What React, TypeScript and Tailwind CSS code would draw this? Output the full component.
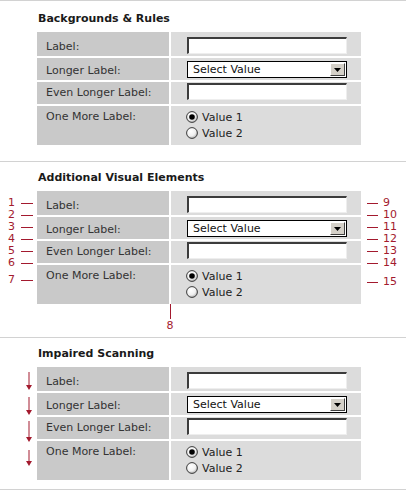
import React from "react";

const RED = "#a31a2e";

function TextInput() {
  return (
    <input
      type="text"
      readOnly
      className="block w-[160px] h-[17px] bg-white border-t-2 border-l-2 border-t-[#3c3c3c] border-l-[#3c3c3c] border-r border-b border-r-[#eeeeee] border-b-[#eeeeee] outline-none"
    />
  );
}

function SelectBox() {
  return (
    <div className="flex w-[160px] h-[17px] bg-white border border-black items-center justify-between">
      <span className="pl-[5px] text-[11px] leading-[13px] text-[#111]">Select Value</span>
      <span className="mr-[1px] flex h-[13px] w-[15px] items-center justify-center bg-[#d4d0c8] border-t border-l border-t-white border-l-white border-r border-b border-r-[#404040] border-b-[#404040]">
        <svg width="7" height="4" viewBox="0 0 7 4">
          <polygon points="0,0 7,0 3.5,4" fill="#000" />
        </svg>
      </span>
    </div>
  );
}

function Radio({ checked, label }: { checked?: boolean; label: string }) {
  const id = checked ? "rg1" : "rg2";
  return (
    <div className="flex h-[16px] items-center gap-[4px]">
      <svg width="12" height="12" viewBox="0 0 12 12">
        <defs>
          <radialGradient id={id} cx="0.4" cy="0.35" r="0.7">
            <stop offset="0" stopColor="#ffffff" />
            <stop offset="0.6" stopColor="#f0f0f0" />
            <stop offset="1" stopColor="#a8a8a8" />
          </radialGradient>
        </defs>
        <circle cx="6" cy="6" r="5.4" fill={`url(#${id})`} stroke="#3a3a3a" strokeWidth="1" />
        {checked && <circle cx="6" cy="6" r="2.8" fill="#000" />}
      </svg>
      <span className="text-[11px] leading-[13px] text-[#222]">{label}</span>
    </div>
  );
}

function Row({
  label,
  rowClass,
  labelClass,
  fieldClass,
  children,
}: {
  label: string;
  rowClass: string;
  labelClass: string;
  fieldClass: string;
  children: React.ReactNode;
}) {
  return (
    <div className={`flex gap-[2px] ${rowClass}`}>
      <div className={`w-[132px] bg-[#c9c9c9] pl-[9px] text-[11px] leading-[13px] text-[#333] ${labelClass}`}>{label}</div>
      <div className={`w-[190px] bg-[#dcdcdc] ${fieldClass}`}>{children}</div>
    </div>
  );
}

function FormTable() {
  return (
    <div className="ml-[37px] flex w-[324px] flex-col gap-[2px]">
      <Row label="Label:" rowClass="h-[24px]" labelClass="pt-[8px]" fieldClass="pl-[16px] pt-[5px]">
        <TextInput />
      </Row>
      <Row label="Longer Label:" rowClass="h-[22px]" labelClass="pt-[6px]" fieldClass="pl-[16px] pt-[3px]">
        <SelectBox />
      </Row>
      <Row label="Even Longer Label:" rowClass="h-[22px]" labelClass="pt-[4px]" fieldClass="pl-[16px] pt-[1px]">
        <TextInput />
      </Row>
      <Row label="One More Label:" rowClass="h-[39px]" labelClass="pt-[4px]" fieldClass="pl-[15px] pt-[3px]">
        <Radio checked label="Value 1" />
        <Radio label="Value 2" />
      </Row>
    </div>
  );
}

function LeftNote({ n, top }: { n: string; top: string }) {
  return (
    <div className={`absolute left-[8px] flex h-[10px] items-center ${top}`}>
      <span className="w-[13px] text-[11px] leading-[10px] text-[#a31a2e]">{n}</span>
      <span className="h-px w-[12px] bg-[#a31a2e]" />
    </div>
  );
}

function RightNote({ n, top }: { n: string; top: string }) {
  return (
    <div className={`absolute left-[367px] flex h-[10px] items-center ${top}`}>
      <span className="h-px w-[11px] bg-[#a31a2e]" />
      <span className="pl-[5px] text-[11px] leading-[10px] text-[#a31a2e]">{n}</span>
    </div>
  );
}

function Arrow({ top, h }: { top: string; h: number }) {
  return (
    <div className={`absolute left-[25px] ${top}`}>
      <svg width="8" height={h} viewBox={`0 0 8 ${h}`}>
        <line x1="4" y1="0" x2="4" y2={h - 4} stroke={RED} strokeWidth="1" />
        <polygon points={`1,${h - 5} 7,${h - 5} 4,${h}`} fill={RED} />
      </svg>
    </div>
  );
}

export default function App() {
  return (
    <div className="w-[406px] bg-white font-['DejaVu_Sans',Verdana,sans-serif]">
      <section className="border-t border-[#d2d2d2] pb-[16px]">
        <h2 className="h-[31px] pl-[38px] pt-[11px] text-[11px] font-bold leading-[13px] text-[#1a1a1a]">
          Backgrounds &amp; Rules
        </h2>
        <FormTable />
      </section>

      <section className="border-t border-[#d2d2d2]">
        <h2 className="h-[29px] pl-[38px] pt-[9px] text-[11px] font-bold leading-[13px] text-[#1a1a1a]">
          Additional Visual Elements
        </h2>
        <div className="relative">
          <FormTable />
          <LeftNote n="1" top="top-[7px]" />
          <LeftNote n="2" top="top-[19px]" />
          <LeftNote n="3" top="top-[31px]" />
          <LeftNote n="4" top="top-[43px]" />
          <LeftNote n="5" top="top-[55px]" />
          <LeftNote n="6" top="top-[67px]" />
          <LeftNote n="7" top="top-[84px]" />
          <RightNote n="9" top="top-[7px]" />
          <RightNote n="10" top="top-[19px]" />
          <RightNote n="11" top="top-[31px]" />
          <RightNote n="12" top="top-[43px]" />
          <RightNote n="13" top="top-[55px]" />
          <RightNote n="14" top="top-[67px]" />
          <RightNote n="15" top="top-[86px]" />
        </div>
        <div className="h-[33px]">
          <div className="ml-[164px] flex w-[12px] flex-col items-center">
            <span className="h-[15px] w-px bg-[#a31a2e]" />
            <span className="mt-[2px] text-[11px] leading-[9px] text-[#a31a2e]">8</span>
          </div>
        </div>
      </section>

      <section className="border-t border-b border-[#d2d2d2] pb-[9px]">
        <h2 className="h-[29px] pl-[38px] pt-[9px] text-[11px] font-bold leading-[13px] text-[#1a1a1a]">
          Impaired Scanning
        </h2>
        <div className="relative">
          <FormTable />
          <Arrow top="top-[5px]" h={18} />
          <Arrow top="top-[30px]" h={18} />
          <Arrow top="top-[54px]" h={21} />
          <Arrow top="top-[83px]" h={16} />
        </div>
      </section>
    </div>
  );
}
